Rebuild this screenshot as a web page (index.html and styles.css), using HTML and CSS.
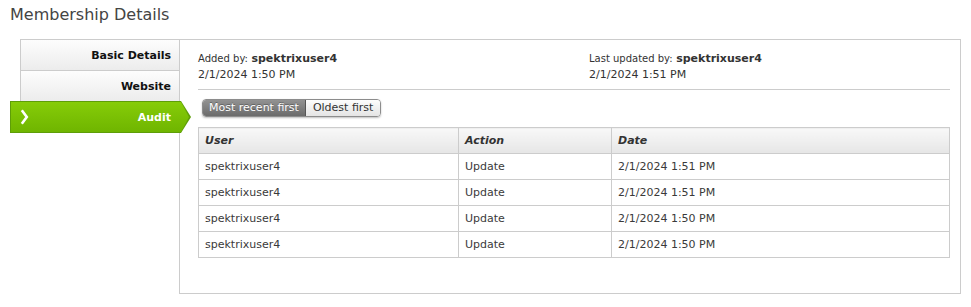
FILE: index.html
```html
<!DOCTYPE html>
<html>
<head>
  <title>Membership Details</title>
  <link rel="stylesheet" href="styles.css">
</head>
<body>
  <h1 class="page-title">Membership Details</h1>

  <div class="layout">
    <ul class="tabs">
      <li class="tab">Basic Details</li>
      <li class="tab">Website</li>
      <li class="tab active">
        <svg class="chevron" width="9" height="16" viewBox="0 0 9 16">
          <path d="M1.8 1.2 L6.8 8 L1.8 14.8" fill="none" stroke="#fff" stroke-width="2.6" stroke-linejoin="miter"/>
        </svg>
        <span>Audit</span>
      </li>
    </ul>

    <div class="panel">
      <div class="info">
        <div>
          <div><span class="label">Added by:</span> <b>spektrixuser4</b></div>
          <div>2/1/2024 1:50 PM</div>
        </div>
        <div>
          <div><span class="label">Last updated by:</span> <b>spektrixuser4</b></div>
          <div>2/1/2024 1:51 PM</div>
        </div>
      </div>

      <div class="toggle">
        <button class="on">Most recent first</button><button>Oldest first</button>
      </div>

      <table class="audit">
        <colgroup>
          <col class="c-user">
          <col class="c-action">
          <col>
        </colgroup>
        <thead>
          <tr><th>User</th><th>Action</th><th>Date</th></tr>
        </thead>
        <tbody>
          <tr><td>spektrixuser4</td><td>Update</td><td>2/1/2024 1:51 PM</td></tr>
          <tr><td>spektrixuser4</td><td>Update</td><td>2/1/2024 1:51 PM</td></tr>
          <tr><td>spektrixuser4</td><td>Update</td><td>2/1/2024 1:50 PM</td></tr>
          <tr><td>spektrixuser4</td><td>Update</td><td>2/1/2024 1:50 PM</td></tr>
        </tbody>
      </table>
    </div>
  </div>
</body>
</html>
```

FILE: styles.css
```css
body {
  font-family: "DejaVu Sans", Verdana, sans-serif;
  font-size: 11px;
  color: #333;
  margin: 0;
  padding: 5px 10px 0 10px;
  background: #fff;
}

.page-title {
  font-size: 16px;
  font-weight: normal;
  line-height: 20px;
  color: #444;
  margin: 0 0 14px;
}

.layout {
  display: flex;
  align-items: flex-start;
}

/* left tabs */
.tabs {
  list-style: none;
  margin: 0;
  padding: 0;
  width: 169px;
  flex: none;
}

.tab {
  box-sizing: border-box;
  height: 31px;
  margin-left: 10px;
  padding-right: 8px;
  border-left: 1px solid #ccc;
  border-bottom: 1px solid #ccc;
  background: linear-gradient(#fdfdfd, #ececec);
  font-weight: bold;
  color: #111;
  display: flex;
  align-items: center;
  justify-content: flex-end;
}

.tab:first-child {
  height: 32px;
  border-top: 1px solid #ccc;
}

.tab.active {
  position: relative;
  z-index: 1;
  width: 171px;
  height: 32px;
  margin-left: 0;
  margin-top: -1px;
  padding-right: 10px;
  border: 1px solid #5e9e08;
  border-right: none;
  background: linear-gradient(#86cc08, #6fb500);
  color: #fff;
  justify-content: space-between;
}

.tab.active::before,
.tab.active::after {
  content: "";
  position: absolute;
  clip-path: polygon(0 0, 100% 50%, 0 100%);
}

.tab.active::before {
  left: 100%;
  top: -1px;
  width: 10px;
  height: 32px;
  background: #5e9e08;
}

.tab.active::after {
  left: 100%;
  top: 0;
  width: 8px;
  height: 30px;
  background: linear-gradient(#86cc08, #6fb500);
}

.chevron {
  margin-left: 9px;
  display: block;
}

/* main panel */
.panel {
  flex: 1;
  border: 1px solid #ccc;
  padding: 10px 10px 35px 18px;
  min-width: 0;
}

.info {
  display: grid;
  grid-template-columns: 391px 1fr;
  line-height: 16px;
  padding-top: 1px;
  padding-bottom: 6px;
  border-bottom: 1px solid #ccc;
}

.info .label {
  font-size: 10px;
}

.info b {
  font-size: 11px;
  color: #333;
}

.toggle {
  display: inline-flex;
  margin: 9px 0 0 4px;
  border: 1px solid #8c8c8c;
  border-radius: 4px;
  overflow: hidden;
  box-shadow: 0 1px 2px rgba(0,0,0,0.25);
}

.toggle button {
  font-family: inherit;
  font-size: 11px;
  height: 16px;
  line-height: 16px;
  padding: 0 7px;
  border: none;
  margin: 0;
  color: #333;
  background: linear-gradient(#fdfdfd, #e4e4e4);
}

.toggle button.on {
  padding: 0 6px;
  color: #fff;
  background: linear-gradient(#929292, #6b6b6b);
  border-right: 1px solid #555;
  text-shadow: 0 -1px 0 rgba(0,0,0,0.3);
}

.audit {
  width: 100%;
  margin-top: 10px;
  border-collapse: collapse;
  table-layout: fixed;
}

.c-user {
  width: 260px;
}

.c-action {
  width: 153px;
}

.audit th,
.audit td {
  border: 1px solid #ccc;
  height: 25px;
  padding: 0 6px;
  text-align: left;
  vertical-align: middle;
}

.audit th {
  font-style: italic;
  font-weight: bold;
  color: #333;
  background: linear-gradient(#f8f8f8, #e6e6e6);
}

.audit td {
  color: #3a3a3a;
}
```
